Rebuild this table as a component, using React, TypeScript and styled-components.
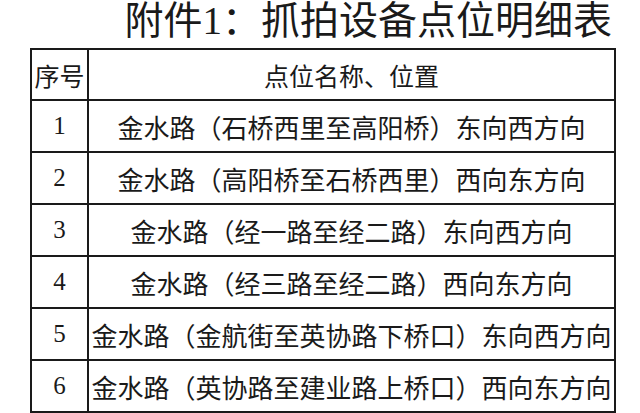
import styled, { createGlobalStyle } from "styled-components";

const rows = [
  "金水路（石桥西里至高阳桥）东向西方向",
  "金水路（高阳桥至石桥西里）西向东方向",
  "金水路（经一路至经二路）东向西方向",
  "金水路（经三路至经二路）西向东方向",
  "金水路（金航街至英协路下桥口）东向西方向",
  "金水路（英协路至建业路上桥口）西向东方向",
];

export default function App() {
  return (
    <>
      <GlobalStyle />
      <Page>
        <Title>附件1：抓拍设备点位明细表</Title>
        <Table>
          <Cell $head>序号</Cell>
          <Cell $head>点位名称、位置</Cell>
          {rows.map((text, i) => (
            <Row key={i}>
              <NumCell>{i + 1}</NumCell>
              <Cell>{text}</Cell>
            </Row>
          ))}
        </Table>
      </Page>
    </>
  );
}

const GlobalStyle = createGlobalStyle`
  html, body {
    margin: 0;
    background: #fff;
    overflow: hidden;
  }
`;

const Page = styled.div`
  width: 640px;
  height: 413px;
  padding-left: 30px;
  box-sizing: border-box;
  font-family: "Liberation Serif", "Noto Sans CJK SC", serif;
  color: #1a1a1a;
`;

const Title = styled.div`
  width: 586px;
  box-sizing: border-box;
  padding-right: 4px;
  height: 48px;
  line-height: 42px;
  font-size: 39px;
  text-align: right;
  white-space: nowrap;
`;

const Table = styled.div`
  width: 586px;
  display: grid;
  grid-template-columns: 57px 1fr;
  grid-template-rows: 51px repeat(6, 52px);
  border-top: 2px solid #1a1a1a;
  border-left: 2px solid #1a1a1a;
  box-sizing: border-box;
`;

const Row = styled.div`
  display: contents;
`;

const Cell = styled.div<{ $head?: boolean }>`
  display: flex;
  align-items: center;
  justify-content: center;
  box-sizing: border-box;
  border-right: 2px solid #1a1a1a;
  border-bottom: 2px solid #1a1a1a;
  font-size: ${(p) => (p.$head ? "25px" : "26px")};
  white-space: nowrap;
  overflow: hidden;
`;

const NumCell = styled(Cell)`
  font-size: 25px;
`;
